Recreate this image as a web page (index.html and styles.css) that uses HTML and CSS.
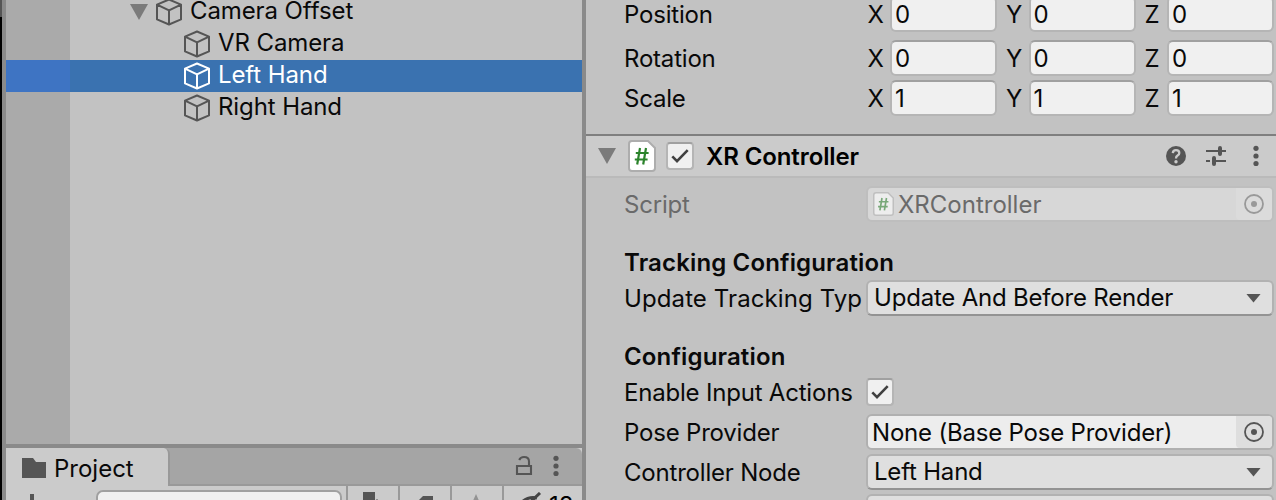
FILE: index.html
```
<!DOCTYPE html>
<html lang="en">
<head>
    <meta charset="UTF-8">
    <meta name="viewport" content="width=device-width, initial-scale=1.0">
    <title>XR Controller</title>
    <link rel="stylesheet" href="styles.css">
</head>
<body>
    <!-- shared icons -->
    <svg class="defs" width="0" height="0">
        <symbol id="cube" viewBox="0 0 28 28">
            <path d="M14 1.5L26 6.6V21.4L14 26.5L2 21.4V6.6ZM2 6.6L14 12.4L26 6.6M14 12.4V26.5" fill="none" stroke="currentColor" stroke-width="2" stroke-linejoin="round"/>
        </symbol>
        <symbol id="check" viewBox="0 0 24 24">
            <path d="M4.3 12.4L9 17.1L19.7 6.1" fill="none" stroke="#404040" stroke-width="2.6"/>
        </symbol>
        <symbol id="dots" viewBox="0 0 6 22">
            <circle cx="3" cy="3.3" r="2.6"/><circle cx="3" cy="11" r="2.6"/><circle cx="3" cy="18.5" r="2.6"/>
        </symbol>
        <symbol id="script" viewBox="0 0 28 32">
            <path d="M4 1H20L27 8V28Q27 31 24 31H4Q1 31 1 28V4Q1 1 4 1Z" fill="#fff" stroke="#adadad" stroke-width="2"/>
            <path d="M12 8L9.2 24.5M18 8L15.2 24.5M7.8 13H20.6M6.8 19.5H19.6" fill="none" stroke="#2b832b" stroke-width="2.2"/>
        </symbol>
        <symbol id="target" viewBox="0 0 20 20">
            <circle cx="10" cy="10" r="9" fill="none" stroke="currentColor" stroke-width="1.8"/><circle cx="10" cy="10" r="3" fill="currentColor"/>
        </symbol>
    </svg>

    <div class="editor">
        <div class="edge"></div>
        <div class="left">
            <div class="hierarchy">
                <div class="item parent"><span class="arrow"></span><svg class="cube"><use href="#cube"/></svg><span>Camera Offset</span></div>
                <div class="item"><svg class="cube"><use href="#cube"/></svg><span>VR Camera</span></div>
                <div class="item selected"><svg class="cube"><use href="#cube"/></svg><span>Left Hand</span></div>
                <div class="item"><svg class="cube"><use href="#cube"/></svg><span>Right Hand</span></div>
            </div>
            <div class="project">
                <div class="tabs">
                    <div class="tab">
                        <svg width="24" height="20" viewBox="0 0 24 20"><path d="M0 0H11L14 4H24V20H0Z" fill="#555"/></svg>
                        <span>Project</span>
                    </div>
                    <svg class="lock" width="18" height="22" viewBox="0 0 18 22"><path d="M2 11H16V19H2ZM14 11V6.5Q14 2 9 2Q5.5 2 4.2 5" fill="none" stroke="#555" stroke-width="2.1"/></svg>
                    <svg class="dots"><use href="#dots"/></svg>
                </div>
                <div class="toolbar">
                    <div class="plus"><svg width="20" height="20" viewBox="0 0 20 20"><path d="M10 0V20M0 10H20" stroke="#555" stroke-width="4"/></svg></div>
                    <div class="search"></div>
                    <div class="tool"><svg width="28" height="24" viewBox="0 0 28 24"><path d="M7 0H19V10H7ZM21 7L28 14L21 24L14 14Z" fill="#555"/></svg></div>
                    <div class="tool"><svg width="28" height="24" viewBox="0 0 28 24"><path d="M15 4H25V14L15 24L5 14Z" fill="#555"/></svg></div>
                    <div class="tool"><svg width="32" height="24" viewBox="0 0 32 24"><path d="M16 2L20 11H30L22 17L25 26L16 20L7 26L10 17L2 11H12Z" fill="#939393"/></svg></div>
                    <div class="tool hidden"><svg width="28" height="24" viewBox="0 0 28 24"><path d="M0 12Q7 4 17 6M4 16L20 1" fill="none" stroke="#444" stroke-width="3"/></svg><span>18</span></div>
                </div>
            </div>
        </div>

        <div class="inspector">
            <div class="row position"><label>Position</label>
                <div class="vector"><span>X</span><div class="input">0</div><span>Y</span><div class="input">0</div><span>Z</span><div class="input">0</div></div>
            </div>
            <div class="row rotation"><label>Rotation</label>
                <div class="vector"><span>X</span><div class="input">0</div><span>Y</span><div class="input">0</div><span>Z</span><div class="input">0</div></div>
            </div>
            <div class="row"><label>Scale</label>
                <div class="vector"><span>X</span><div class="input">1</div><span>Y</span><div class="input">1</div><span>Z</span><div class="input">1</div></div>
            </div>

            <div class="component">
                <span class="arrow"></span>
                <svg class="script-icon"><use href="#script"/></svg>
                <div class="checkbox"><svg><use href="#check"/></svg></div>
                <h2>XR Controller</h2>
                <svg class="help" width="20" height="20" viewBox="0 0 20 20"><circle cx="10" cy="10" r="10" fill="#555"/><path d="M6.8 7.2Q7 4.2 10 4.2Q13.3 4.2 13.3 7Q13.3 8.6 11.6 9.6Q10 10.5 10 12.6" fill="none" stroke="#cbcbcb" stroke-width="2.3"/><circle cx="10" cy="15.7" r="1.7" fill="#cbcbcb"/></svg>
                <svg class="sliders" width="20" height="20" viewBox="0 0 20 20"><path d="M0 5H12M16 5H20M0 15H4M10 15H20" stroke="#555" stroke-width="2"/><path d="M14 2V8M8 12V18" stroke="#555" stroke-width="4" stroke-linecap="round"/></svg>
                <svg class="dots"><use href="#dots"/></svg>
            </div>

            <div class="row script"><label>Script</label>
                <div class="object"><svg class="script-small"><use href="#script"/></svg><span>XRController</span><div class="picker"><svg><use href="#target"/></svg></div></div>
            </div>

            <h3>Tracking Configuration</h3>
            <div class="row"><label class="long">Update Tracking Typ</label>
                <div class="dropdown"><span>Update And Before Render</span></div>
            </div>

            <h3>Configuration</h3>
            <div class="row"><label>Enable Input Actions</label>
                <div class="checkbox"><svg><use href="#check"/></svg></div>
            </div>
            <div class="row"><label>Pose Provider</label>
                <div class="object"><span>None (Base Pose Provider)</span><div class="picker"><svg><use href="#target"/></svg></div></div>
            </div>
            <div class="row"><label>Controller Node</label>
                <div class="dropdown"><span>Left Hand</span></div>
            </div>
            <div class="row"><label></label><div class="dropdown"></div></div>
        </div>
    </div>
</body>
</html>
```
FILE: styles.css
```
* {
    box-sizing: border-box;
}
body {
    margin: 0;
    font-family: Inter, sans-serif;
    font-size: 24px;
    color: #090909;
    background: #8a8a8a;
    overflow: hidden;
    white-space: nowrap;
}
svg {
    display: block;
    flex-shrink: 0;
}
.defs {
    position: absolute;
}
.editor {
    display: flex;
    gap: 4px;
    height: 500px;
    overflow: hidden;
}
.edge {
    width: 2px;
    background: linear-gradient(#555 17px, #000 17px);
}
.left {
    width: 576px;
    height: 500px;
    display: flex;
    flex-direction: column;
    gap: 4px;
}

/* hierarchy */
.hierarchy {
    height: 444px;
    flex-shrink: 0;
    overflow: hidden;
    background: linear-gradient(to right, #aaa 64px, #c2c2c2 64px);
}
.item {
    display: flex;
    align-items: center;
    height: 32px;
    padding-left: 177px;
    letter-spacing: -.1px;
}
.item.parent {
    margin-top: -4px;
    padding-left: 124px;
}
.item span:last-child {
    margin-left: 7px;
    margin-top: -4px;
}
.item.selected {
    color: #fff;
    background: linear-gradient(to right, #3e74c3 64px, #3a72b0 64px);
}
.cube {
    width: 28px;
    height: 28px;
    color: #555;
}
.selected .cube {
    color: #fff;
}
.arrow {
    width: 18px;
    height: 16px;
    background: #7b7b7b;
    clip-path: polygon(0 0, 100% 0, 50% 100%);
}
.parent .arrow {
    margin-right: 7px;
}

/* project window */
.project {
    height: 52px;
    flex-shrink: 0;
    overflow: hidden;
    background: #cbcbcb;
}
.tabs {
    display: flex;
    align-items: center;
    height: 38px;
    padding-right: 23px;
    background: #a5a5a5;
    border-bottom: 2px solid #999;
    border-top-right-radius: 6px;
}
.tab {
    display: flex;
    align-items: center;
    gap: 8px;
    width: 164px;
    height: 38px;
    margin-bottom: -2px;
    padding: 2px 0 0 16px;
    background: #cbcbcb;
    border-right: 2px solid #999;
    border-top-right-radius: 6px;
}
.lock {
    margin-left: auto;
    margin-right: 20px;
}
.dots {
    width: 6px;
    height: 22px;
    fill: #555;
}
.toolbar {
    display: flex;
    height: 36px;
}
.plus {
    width: 90px;
    padding: 8px 0 0 16px;
}
.search {
    width: 246px;
    height: 36px;
    margin: 4px 4px 0 0;
    background: #f0f0f0;
    border: 2px solid #a0a0a0;
    border-radius: 7px;
}
.tool {
    display: flex;
    width: 52px;
    padding: 6px 0 0 8px;
    border-left: 2px solid #999;
}
.tool.hidden {
    width: 80px;
    padding-left: 16px;
    color: #000;
}
.tool.hidden span {
    margin: -1px 0 0 1px;
}

/* inspector */
.inspector {
    width: 690px;
    background: #c2c2c2;
}
.row {
    display: flex;
    align-items: center;
    height: 36px;
    margin-bottom: 4px;
    padding-left: 38px;
}
.row.position {
    margin-top: -4px;
    margin-bottom: 8px;
}
.row label {
    width: 242px;
    flex-shrink: 0;
    letter-spacing: -.2px;
}
.row label.long {
    letter-spacing: .1px;
}
.vector {
    display: flex;
    align-items: center;
    margin-left: 1.5px;
}
.vector span {
    width: 22.5px;
}
.input {
    width: 107px;
    height: 36px;
    margin-right: 9px;
    padding-left: 3px;
    line-height: 33px;
    background: #f0f0f0;
    border: 2px solid #b5b5b5;
    border-top-color: #a0a0a0;
    border-radius: 6px;
}
.vector .input:last-child {
    margin-right: 0;
}
.component {
    display: flex;
    align-items: center;
    height: 44px;
    margin: 18px 0 8px;
    padding: 0 17px 0 12px;
    background: #cbcbcb;
    border-top: 2px solid #7f7f7f;
    border-bottom: 2px solid #bababa;
}
.script-icon {
    width: 28px;
    height: 32px;
    margin: 0 10px 0 12px;
}
.checkbox {
    width: 28px;
    height: 28px;
    background: #f0f0f0;
    border: 2px solid #b5b5b5;
    border-top-color: #a0a0a0;
    border-radius: 4px;
}
.checkbox svg {
    width: 24px;
    height: 24px;
}
h2, h3 {
    margin: 0;
    font-size: 24px;
    font-weight: 600;
}
h2 {
    margin-left: 12px;
    color: #000;
    letter-spacing: -.1px;
}
.help {
    margin-left: auto;
}
.sliders {
    margin: 0 37px 0 20px;
}
.component .sliders {
    margin-right: 27px;
}
h3 {
    height: 36px;
    margin-top: 22px;
    padding-left: 38px;
    line-height: 38px;
    letter-spacing: .15px;
}
.object, .dropdown {
    display: flex;
    align-items: center;
    width: 408px;
    height: 36px;
    background: #ededed;
    border: 2px solid #b0b0b0;
    border-radius: 6px;
}
.object > span {
    margin: 1px 0 0 4px;
    letter-spacing: -.2px;
}
.picker {
    width: 36px;
    height: 32px;
    margin-left: auto;
    padding: 6px 0 0 8px;
    color: #555;
    background: #dedede;
    border-radius: 0 4px 4px 4px;
}
.picker svg {
    width: 20px;
    height: 20px;
}
.dropdown {
    background: #dfdfdf;
    border-color: #b2b2b2;
    border-bottom-color: #939393;
}
.dropdown span {
    margin: -2px 0 0 6px;
    letter-spacing: -.2px;
}
.dropdown::after {
    content: "";
    width: 15px;
    height: 9px;
    margin-left: auto;
    margin-right: 11px;
    background: #555;
    clip-path: polygon(0 0, 100% 0, 50% 100%);
}

/* disabled script field */
.script label, .script .object {
    color: #6a6a6a;
}
.script .object {
    background: #d7d7d7;
    border-color: #bebebe;
}
.script .object > span {
    margin-left: 4px;
    letter-spacing: 0;
}
.script .picker {
    color: #999;
    background: #dbdbdb;
}
.script-small {
    width: 21px;
    height: 24px;
    margin-left: 5px;
    opacity: .55;
}
```
